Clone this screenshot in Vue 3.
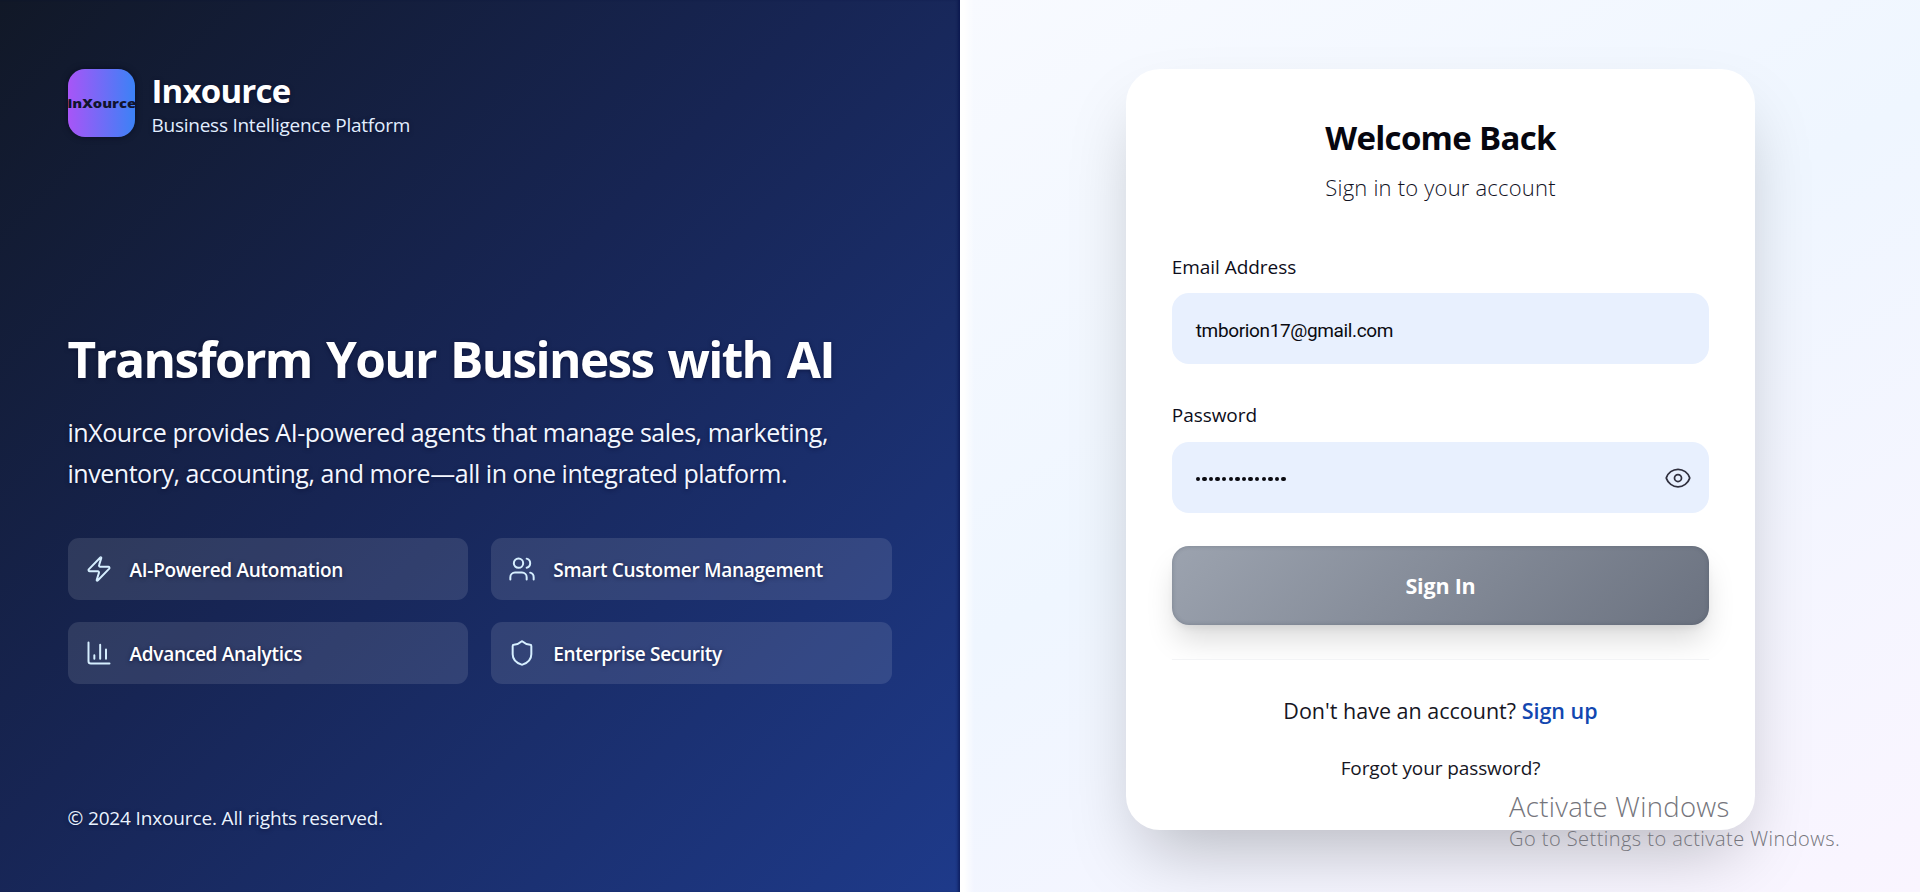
<script setup>
const features = [
  { label: 'AI-Powered Automation', icon: 'zap' },
  { label: 'Smart Customer Management', icon: 'users' },
  { label: 'Advanced Analytics', icon: 'chart' },
  { label: 'Enterprise Security', icon: 'shield' }
]
</script>

<template>
  <div class="page">
    <section class="hero">
      <header class="brand">
        <div class="logo"><span class="logo-text">inXource</span></div>
        <div class="brand-text">
          <div class="brand-name">Inxource</div>
          <div class="brand-sub">Business Intelligence Platform</div>
        </div>
      </header>
      <div class="pitch">
        <h1>Transform Your Business with AI</h1>
        <p class="lead">inXource provides AI-powered agents that manage sales, marketing,<br>inventory, accounting, and more—all in one integrated platform.</p>
        <div class="features">
          <div v-for="f in features" :key="f.label" class="feature">
            <svg class="icon" viewBox="0 0 24 24">
              <path v-if="f.icon === 'zap'" d="M4 14a1 1 0 0 1-.78-1.63l9.9-10.2a.5.5 0 0 1 .86.46l-1.92 6.02A1 1 0 0 0 13 10h7a1 1 0 0 1 .78 1.63l-9.9 10.2a.5.5 0 0 1-.86-.46l1.92-6.02A1 1 0 0 0 11 14z" />
              <template v-else-if="f.icon === 'users'">
                <path d="M16 21v-2a4 4 0 0 0-4-4H6a4 4 0 0 0-4 4v2" />
                <circle cx="9" cy="7" r="4" />
                <path d="M22 21v-2a4 4 0 0 0-3-3.87M16 3.13a4 4 0 0 1 0 7.75" />
              </template>
              <path v-else-if="f.icon === 'chart'" d="M3 3v16a2 2 0 0 0 2 2h16M18 17V9M13 17V5M8 17v-3" />
              <path v-else d="M20 13c0 5-3.5 7.5-7.66 8.95a1 1 0 0 1-.67-.01C7.5 20.5 4 18 4 13V6a1 1 0 0 1 1-1c2 0 4.5-1.2 6.24-2.72a1.17 1.17 0 0 1 1.52 0C14.51 3.81 17 5 19 5a1 1 0 0 1 1 1z" />
            </svg>
            <span>{{ f.label }}</span>
          </div>
        </div>
      </div>
      <footer class="copy">© 2024 Inxource. All rights reserved.</footer>
    </section>

    <section class="auth">
      <main class="card">
        <h2>Welcome Back</h2>
        <p class="sub">Sign in to your account</p>
        <div class="label">Email Address</div>
        <div class="field"><span class="value">tmborion17@gmail.com</span></div>
        <div class="label second">Password</div>
        <div class="field">
          <div class="dots"><i v-for="n in 14" :key="n"></i></div>
          <svg class="eye" viewBox="0 0 24 24">
            <path d="M2.036 12.322a1.012 1.012 0 0 1 0-.639C3.423 7.51 7.36 4.5 12 4.5c4.638 0 8.573 3.007 9.963 7.178.07.207.07.431 0 .639C20.577 16.49 16.64 19.5 12 19.5c-4.638 0-8.573-3.007-9.963-7.178z" />
            <circle cx="12" cy="12" r="3" />
          </svg>
        </div>
        <button class="submit">Sign In</button>
        <div class="links">
          <p class="signup">Don't have an account? <a>Sign up</a></p>
          <a class="forgot">Forgot your password?</a>
        </div>
      </main>
    </section>

    <aside class="watermark">
      <div class="wm-title">Activate Windows</div>
      <div class="wm-sub">Go to Settings to activate Windows.</div>
    </aside>
  </div>
</template>

<style>
body { margin: 0; overflow: hidden; }
</style>

<style scoped>
* { box-sizing: border-box; margin: 0; padding: 0; }
.page { position: relative; display: flex; width: 1920px; height: 892px; overflow: hidden; font-family: "Open Sans", "Noto Sans", sans-serif; }

.hero { width: 960px; display: flex; flex-direction: column; padding: 69px 68px 60.5px 67.5px; color: #fff; background: linear-gradient(135deg, #111827 0%, #172554 45%, #1e3a8a 100%); box-shadow: inset -3px 0 3px -1px rgba(5, 15, 70, .6); text-shadow: 0 1px 4px rgba(3, 7, 40, .55); }
.brand { display: flex; gap: 16px; height: 68px; }
.logo { width: 67.5px; height: 68px; border-radius: 17px; overflow: hidden; display: flex; align-items: center; justify-content: center; background: linear-gradient(90deg, #a855f7, #3b82f6); box-shadow: 0 0 6px rgba(3, 7, 25, .6); }
.logo-text { color: #11142e; font-size: 11.5px; font-weight: 800; white-space: nowrap; text-shadow: none; transform: scaleX(1.28); }
.brand-text { margin-top: -1.5px; }
.brand-name { font-size: 33px; font-weight: 700; line-height: 45px; letter-spacing: -.8px; margin-left: .5px; }
.brand-sub { margin-top: .5px; margin-left: .5px; font-size: 19px; line-height: 24px; letter-spacing: -.25px; color: #e2eeff; white-space: nowrap; }
.pitch { margin-top: 189.5px; }
h1 { font-size: 49.5px; font-weight: 700; line-height: 64px; letter-spacing: -1.65px; word-spacing: 3px; white-space: nowrap; padding-top: .5px; }
.lead { font-size: 25px; line-height: 41px; letter-spacing: -.47px; margin-top: 20.5px; white-space: nowrap; color: #f3f7ff; }
.features { display: grid; grid-template-columns: 1fr 1fr; gap: 22px 23px; margin-top: 44.5px; }
.feature { height: 62px; display: flex; align-items: center; gap: 17px; padding: 0 17px; border-radius: 11px; background: rgba(255, 255, 255, .11); font-size: 19px; font-weight: 650; letter-spacing: -.28px; white-space: nowrap; }
.feature span { padding-top: 1px; }
.icon { width: 28px; height: 28px; flex: none; fill: none; stroke: #d6efff; stroke-width: 1.7; stroke-linecap: round; stroke-linejoin: round; }
.copy { margin-top: auto; font-size: 19px; line-height: 28px; letter-spacing: -.15px; color: #eaf3ff; }

.auth { flex: 1; display: flex; justify-content: center; padding-top: 69px; background: linear-gradient(90deg, #fff 0, #fff 4px, rgba(255, 255, 255, 0) 14px), linear-gradient(150deg, #f8faff 0%, #eff6ff 45%, #faf5ff 100%); }
.card { width: 629.5px; height: 761px; margin-left: 1px; padding: 45px 46px; border-radius: 34px; background: #fff; text-align: center; box-shadow: 0 35px 70px -17px rgba(0, 0, 0, .25); }
h2 { font-size: 33px; line-height: 48px; letter-spacing: -.7px; color: #06060f; }
.sub { font-size: 22px; line-height: 32px; letter-spacing: .2px; margin-top: 9px; font-weight: 300; color: #12121f; }
.label { text-align: left; font-size: 19px; font-weight: 500; line-height: 28px; margin: 49.6px 0 12.8px; color: #0d0d1a; letter-spacing: -.05px; }
.label.second { margin-top: 37.4px; }
.field { height: 70.7px; border-radius: 17px; background: #e8f0fe; display: flex; align-items: center; justify-content: space-between; padding: 0 17px 0 24px; }
.value { font: 19px Roboto, sans-serif; letter-spacing: -.36px; padding-top: 4px; color: #0a0a10; }
.dots { display: flex; gap: 2.2px; padding-top: 3px; }
.dots i { width: 4.4px; height: 4.4px; border-radius: 50%; background: #0a0a10; }
.eye { width: 28px; height: 28px; fill: none; stroke: #30303e; stroke-width: 1.5; }
.submit { display: block; width: 100%; height: 79px; margin-top: 33.2px; border: 0; border-radius: 17px; background: linear-gradient(135deg, #9ca3af, #6b7280); color: #fff; font: 700 21.5px "Open Sans", sans-serif; letter-spacing: -.2px; box-shadow: inset 0 0 4px rgba(50, 58, 75, .3), 0 18px 30px -4px rgba(0, 0, 0, .15), 0 5px 9px -3px rgba(0, 0, 0, .08); }
.links { position: relative; margin-top: 33.7px; border-top: 1px solid #f3f4f6; padding-top: 35px; background: #fff; }
.signup { font-size: 21.5px; line-height: 32px; color: #16161f; }
.signup a { font-weight: 600; color: #1247b0; }
.forgot { display: block; font-size: 19px; line-height: 28px; margin-top: 27px; letter-spacing: -.1px; color: #16161f; }

.watermark { position: absolute; left: 1509px; top: 789.5px; color: #75757c; font-weight: 300; white-space: nowrap; }
.wm-title { font-size: 27.5px; line-height: 34px; letter-spacing: .3px; }
.wm-sub { font-size: 20px; line-height: 29px; letter-spacing: .45px; }
</style>
